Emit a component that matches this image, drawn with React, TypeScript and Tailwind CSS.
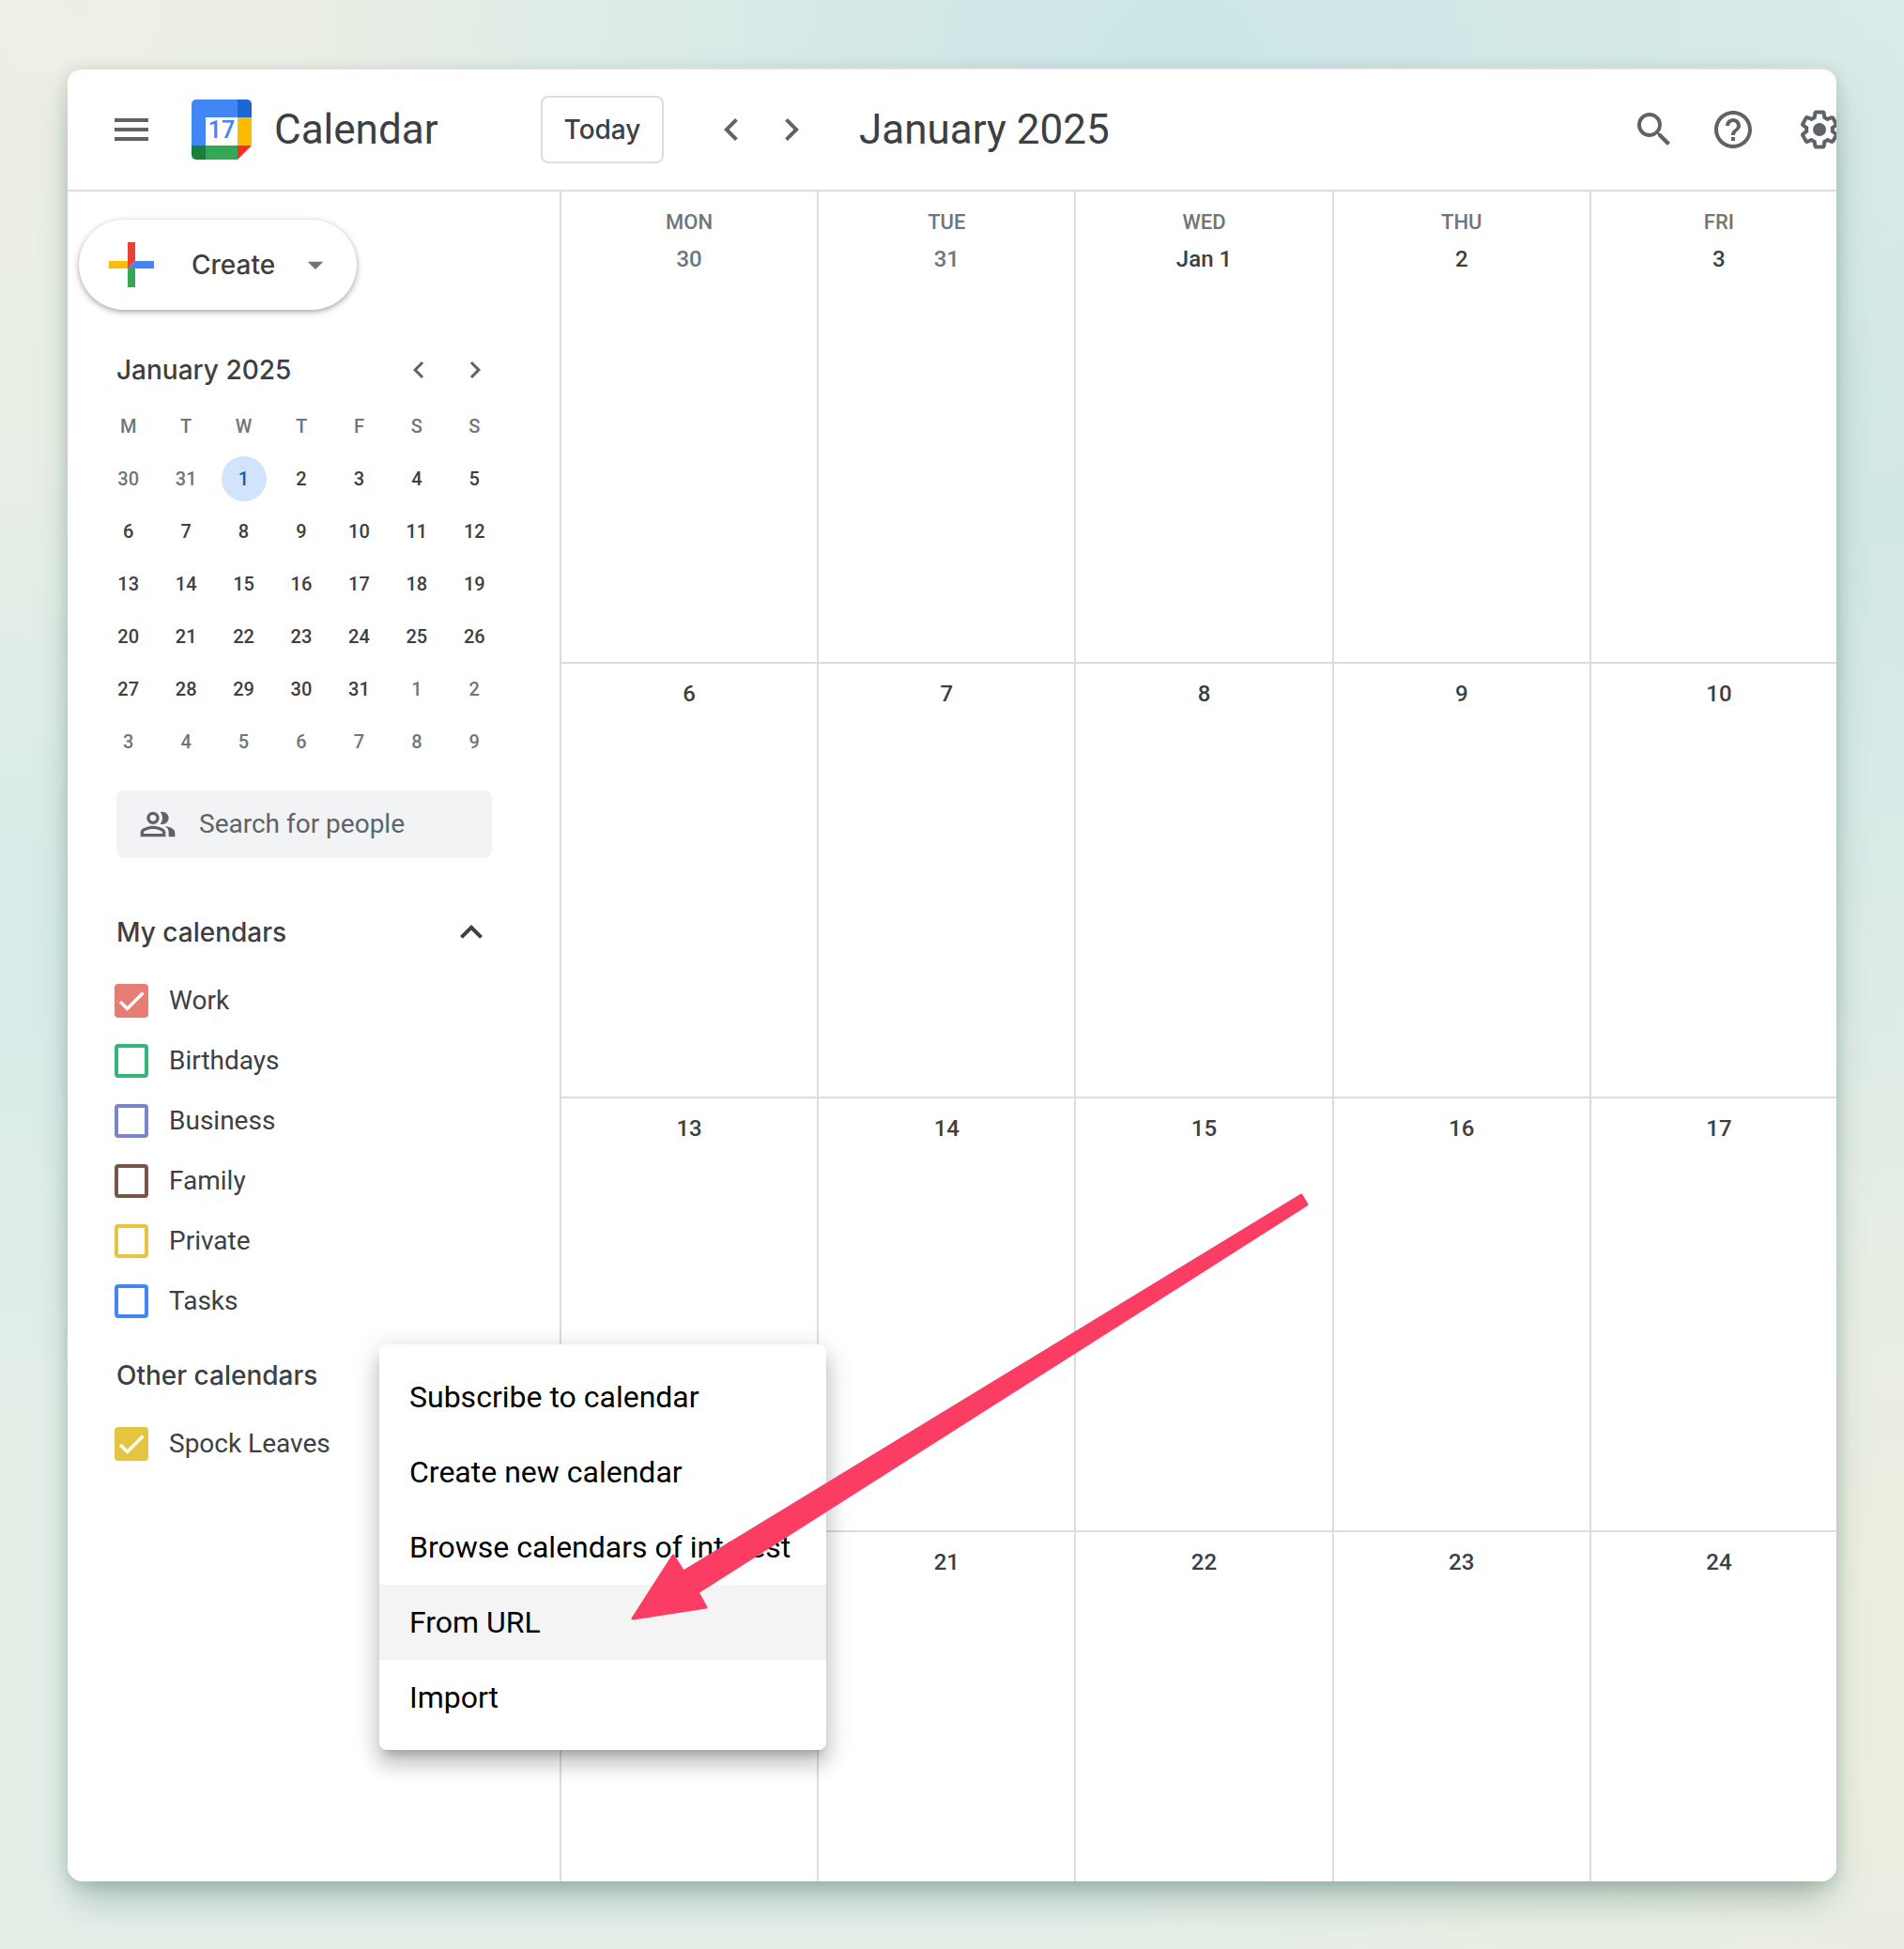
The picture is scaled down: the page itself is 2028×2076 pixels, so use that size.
import { useState } from 'react';
import {
  MdArrowDropDown,
  MdChevronLeft,
  MdChevronRight,
  MdExpandLess,
  MdHelpOutline,
  MdMenu,
  MdSearch,
} from 'react-icons/md';

interface Day {
  label: string;
  muted?: boolean;
}

interface CalendarEntry {
  name: string;
  checked: boolean;
  box: string;
}

const weekdays = ['MON', 'TUE', 'WED', 'THU', 'FRI'];

const weeks: Day[][] = [
  [
    { label: '30', muted: true },
    { label: '31', muted: true },
    { label: 'Jan 1' },
    { label: '2' },
    { label: '3' },
  ],
  [{ label: '6' }, { label: '7' }, { label: '8' }, { label: '9' }, { label: '10' }],
  [{ label: '13' }, { label: '14' }, { label: '15' }, { label: '16' }, { label: '17' }],
  // Monday sits under the open menu
  [{ label: '' }, { label: '21' }, { label: '22' }, { label: '23' }, { label: '24' }],
];

const myCalendars: CalendarEntry[] = [
  { name: 'Work', checked: true, box: 'border-[#e67c73] checked:bg-[#e67c73]' },
  { name: 'Birthdays', checked: false, box: 'border-[#33b679] checked:bg-[#33b679]' },
  { name: 'Business', checked: false, box: 'border-[#7986cb] checked:bg-[#7986cb]' },
  { name: 'Family', checked: false, box: 'border-[#795548] checked:bg-[#795548]' },
  { name: 'Private', checked: false, box: 'border-[#e4c441] checked:bg-[#e4c441]' },
  { name: 'Tasks', checked: false, box: 'border-[#4285f4] checked:bg-[#4285f4]' },
];

const otherCalendars: CalendarEntry[] = [
  { name: 'Spock Leaves', checked: true, box: 'border-[#e4c441] checked:bg-[#e4c441]' },
];

const menuItems = [
  'Subscribe to calendar',
  'Create new calendar',
  'Browse calendars of interest',
  'From URL',
  'Import',
];

// Six weeks starting on Monday, December 30
const miniWeeks = Array.from({ length: 6 }, (_, week) =>
  Array.from({ length: 7 }, (_, day) => {
    const date = new Date(2024, 11, 30 + week * 7 + day);
    return { date: date.getDate(), inMonth: date.getMonth() === 0 };
  })
);

function Logo() {
  return (
    <svg viewBox="0 0 64 64" className="w-16 h-16" aria-hidden="true">
      <path d="M5 0h44v19H15v30H0V5a5 5 0 0 1 5-5z" fill="#4285f4" />
      <path d="M49 0h10a5 5 0 0 1 5 5v14H49z" fill="#1967d2" />
      <path d="M49 19h15v30H49z" fill="#fbbc04" />
      <path d="M15 49h34v15H15z" fill="#34a853" />
      <path d="M0 49h15v15H5a5 5 0 0 1-5-5z" fill="#188038" />
      <path d="M49 49h15L49 64z" fill="#fc2c25" />
      <path d="M15 19h34v30H15z" fill="#fff" />
      <text
        x="32"
        y="41"
        textAnchor="middle"
        fontFamily="Roboto, sans-serif"
        fontSize="25"
        fontWeight="500"
        fill="#4285f4"
      >
        17
      </text>
    </svg>
  );
}

function PlusIcon() {
  return (
    <svg viewBox="0 0 36 36" className="w-[72px] h-[72px]" aria-hidden="true">
      <path fill="#34a853" d="M16 16v14h4V20z" />
      <path fill="#4285f4" d="M30 16H20l-4 4h14z" />
      <path fill="#fbbc05" d="M6 16v4h10l4-4z" />
      <path fill="#ea4335" d="M20 16V6h-4v14z" />
    </svg>
  );
}

function PeopleIcon() {
  return (
    <svg viewBox="0 0 24 24" className="w-10 h-10 shrink-0" fill="currentColor" aria-hidden="true">
      <path d="M15 8c0-1.42-.5-2.73-1.33-3.76.42-.14.86-.24 1.33-.24 2.21 0 4 1.79 4 4s-1.79 4-4 4c-.43 0-.84-.09-1.23-.21-.03-.01-.06-.02-.1-.03A5.98 5.98 0 0 0 15 8zm1.66 5.13C18.03 14.06 19 15.32 19 17v3h4v-3c0-2.18-3.58-3.47-6.34-3.87z" />
      <path
        fillRule="evenodd"
        d="M9 4c2.21 0 4 1.79 4 4s-1.79 4-4 4-4-1.79-4-4 1.79-4 4-4zm0 2a2 2 0 1 0 0 4 2 2 0 0 0 0-4zm0 7c2.67 0 8 1.34 8 4v3H1v-3c0-2.66 5.33-4 8-4zm6 5v-.99C14.8 16.29 11.7 15 9 15s-5.8 1.29-6 2.01V18h12z"
      />
    </svg>
  );
}

function SettingsIcon() {
  return (
    <svg viewBox="0 0 24 24" className="w-12 h-12" fill="currentColor" aria-hidden="true">
      <path d="M13.85 22.25h-3.7c-.74 0-1.36-.54-1.45-1.27l-.27-1.89c-.27-.14-.53-.29-.79-.46l-1.8.72c-.7.26-1.47-.03-1.81-.65L2.2 15.53c-.35-.66-.2-1.44.36-1.88l1.53-1.19c-.01-.15-.02-.3-.02-.46 0-.15.01-.31.02-.46l-1.52-1.19c-.59-.45-.74-1.26-.37-1.88l1.85-3.19c.34-.62 1.11-.9 1.79-.63l1.81.73c.26-.17.52-.32.78-.46l.27-1.91c.09-.7.71-1.25 1.44-1.25h3.7c.74 0 1.36.54 1.45 1.27l.27 1.89c.27.14.53.29.79.46l1.8-.72c.71-.26 1.48.03 1.82.65l1.84 3.18c.36.66.2 1.44-.36 1.88l-1.52 1.19c.01.15.02.3.02.46s-.01.31-.02.46l1.52 1.19c.56.45.72 1.23.37 1.86l-1.86 3.22c-.34.62-1.11.9-1.8.63l-1.8-.72c-.26.17-.52.32-.78.46l-.27 1.91c-.1.68-.72 1.22-1.46 1.22zm-3.23-2h2.76l.37-2.55.53-.22c.44-.18.88-.44 1.34-.78l.45-.34 2.38.96 1.38-2.4-2.03-1.58.07-.56c.03-.26.06-.51.06-.78s-.03-.53-.06-.78l-.07-.56 2.03-1.58-1.39-2.4-2.39.96-.45-.35c-.42-.32-.87-.58-1.33-.77l-.52-.22-.37-2.55h-2.76l-.37 2.55-.53.21c-.44.19-.88.44-1.34.79l-.45.33-2.38-.95-1.39 2.39 2.03 1.58-.07.56a7 7 0 0 0-.06.79c0 .26.02.53.06.78l.07.56-2.03 1.58 1.38 2.4 2.39-.96.45.35c.43.33.86.58 1.33.77l.53.22.38 2.55z" />
      <circle cx="12" cy="12" r="3.5" />
    </svg>
  );
}

function Header() {
  return (
    <header className="flex items-center h-[130px] pl-11 border-b-2 border-[#dadce0] text-[#5f6368]">
      <button aria-label="Main menu">
        <MdMenu className="w-12 h-12" />
      </button>
      <div className="flex items-center ml-10 gap-6">
        <Logo />
        <span className="w-[284px] text-[44px] leading-[56px] text-[#3c4043]">Calendar</span>
      </div>
      <button className="h-[72px] w-[131px] border-2 border-[#dadce0] rounded-lg font-[Inter,sans-serif] text-[28px] font-medium text-[#3c4043]">
        Today
      </button>
      <div className="flex ml-10">
        <button aria-label="Previous month" className="p-2">
          <MdChevronLeft className="w-12 h-12" />
        </button>
        <button aria-label="Next month" className="p-2">
          <MdChevronRight className="w-12 h-12" />
        </button>
      </div>
      <h1 className="ml-10 text-[44px] leading-[56px] text-[#3c4043]">January 2025</h1>
      <div className="flex gap-9 ml-auto -mr-1.5 shrink-0">
        <button aria-label="Search">
          <MdSearch className="w-12 h-12" />
        </button>
        <button aria-label="Support">
          <MdHelpOutline className="w-12 h-12" />
        </button>
        <button aria-label="Settings menu" className="ml-2">
          <SettingsIcon />
        </button>
      </div>
    </header>
  );
}

function MiniCalendar() {
  return (
    <div className="mt-9">
      <div className="flex items-center h-14 pl-[52px] text-[#3c4043]">
        <h2 className="font-[Inter,sans-serif] text-[28px] font-medium">January 2025</h2>
        <div className="flex gap-6 ml-auto mr-[72px] text-[#5f6368]">
          <button aria-label="Previous month">
            <MdChevronLeft className="w-9 h-9" />
          </button>
          <button aria-label="Next month">
            <MdChevronRight className="w-9 h-9" />
          </button>
        </div>
      </div>
      <table className="w-[430px] mt-1 ml-[34px] table-fixed text-center text-xl font-medium text-[#3c4043]">
        <thead>
          <tr className="h-14 text-[#70757a]">
            {['M', 'T', 'W', 'T', 'F', 'S', 'S'].map((day, i) => (
              <th key={i} className="p-0 font-medium">
                {day}
              </th>
            ))}
          </tr>
        </thead>
        <tbody>
          {miniWeeks.map((week, w) => (
            <tr key={w} className="h-14">
              {week.map(({ date, inMonth }) => (
                <td key={date} className={inMonth ? 'p-0' : 'p-0 text-[#70757a]'}>
                  {inMonth && date === 1 ? (
                    <span className="flex items-center justify-center w-12 h-12 mx-auto rounded-full bg-[#d2e3fc] text-[#185abc]">
                      {date}
                    </span>
                  ) : (
                    date
                  )}
                </td>
              ))}
            </tr>
          ))}
        </tbody>
      </table>
    </div>
  );
}

function CalendarList({ entries }: { entries: CalendarEntry[] }) {
  return (
    <ul>
      {entries.map((entry) => (
        <li key={entry.name} className="h-16 pl-[50px] flex items-center">
          <label className="flex items-center gap-[22px] text-[28px] leading-9 text-[#3c4043]">
            <span className="grid w-9 h-9 text-white">
              <input
                type="checkbox"
                defaultChecked={entry.checked}
                className={`peer appearance-none col-start-1 row-start-1 w-9 h-9 border-4 rounded-sm ${entry.box}`}
              />
              <svg
                viewBox="0 0 24 24"
                className="col-start-1 row-start-1 w-9 h-9 opacity-0 peer-checked:opacity-100 pointer-events-none"
                aria-hidden="true"
              >
                <path d="M4.1 12.7 9 17.6 20.3 6.3" fill="none" stroke="currentColor" strokeWidth="2.4" />
              </svg>
            </span>
            {entry.name}
          </label>
        </li>
      ))}
    </ul>
  );
}

function AddCalendarMenu() {
  return (
    <div
      role="menu"
      className="absolute z-10 top-2 left-[332px] w-[476px] py-4 rounded-lg bg-white shadow-[0_10px_10px_-6px_rgba(0,0,0,0.2),0_16px_20px_2px_rgba(0,0,0,0.14),0_6px_28px_4px_rgba(0,0,0,0.12)]"
    >
      {menuItems.map((item) => (
        <button
          key={item}
          role="menuitem"
          className={`block w-full h-20 px-8 text-left text-[32px] whitespace-nowrap text-black ${
            item === 'From URL' ? 'bg-[#f4f4f4]' : ''
          }`}
        >
          {item}
        </button>
      ))}
    </div>
  );
}

function Sidebar() {
  const [open, setOpen] = useState(true);

  return (
    <aside className="w-[524px] shrink-0">
      <button className="flex items-center w-[296px] h-24 mt-[30px] ml-3 pl-5 pr-6 rounded-full bg-white font-[Inter,sans-serif] text-[28px] font-medium text-[#3c4043] shadow-[0_2px_4px_0_rgba(60,64,67,0.3),0_2px_6px_2px_rgba(60,64,67,0.15)]">
        <PlusIcon />
        <span className="ml-7">Create</span>
        <MdArrowDropDown className="w-10 h-10 ml-auto shrink-0 text-[#70757a]" />
      </button>

      <MiniCalendar />

      <label className="flex items-center w-[400px] h-[72px] mt-6 ml-[52px] pl-6 gap-6 rounded-lg bg-[#f1f3f4] text-[#5f6368]">
        <PeopleIcon />
        <input
          type="text"
          placeholder="Search for people"
          aria-label="Search for people"
          className="w-full min-w-0 text-[28px] placeholder:text-[#5f6368] outline-none"
        />
      </label>

      <section className="mt-[38px]">
        <div className="flex items-center justify-between h-[82px] pl-[52px] pr-[70px] text-[#3c4043]">
          <h2 className="font-[Inter,sans-serif] text-[28px] font-medium">My calendars</h2>
          <button aria-label="Toggle my calendars" aria-expanded={open} onClick={() => setOpen(!open)}>
            <MdExpandLess className="w-12 h-12" />
          </button>
        </div>
        {open && <CalendarList entries={myCalendars} />}
      </section>

      <section className="relative mt-1.5">
        <h2 className="flex items-center h-[82px] pl-[52px] font-[Inter,sans-serif] text-[28px] font-medium text-[#3c4043]">
          Other calendars
        </h2>
        <CalendarList entries={otherCalendars} />
        <AddCalendarMenu />
      </section>
    </aside>
  );
}

function MonthGrid() {
  return (
    <main className="flex-1 -mr-[11px] grid grid-cols-5 grid-rows-[501px_463px_462px_1fr]">
      {weeks.map((week, w) =>
        week.map((day, d) => (
          <div
            key={`${w}-${d}`}
            className={`flex flex-col items-center border-l-2 border-[#dadce0] font-medium ${
              w === 0 ? 'pt-5 gap-2.5' : 'pt-4 border-t-2'
            }`}
          >
            {w === 0 && (
              <span className="text-[22px] leading-[26px] text-[#70757a]">{weekdays[d]}</span>
            )}
            <span className={`text-2xl ${day.muted ? 'text-[#70757a]' : 'text-[#3c4043]'}`}>
              {day.label}
            </span>
          </div>
        ))
      )}
    </main>
  );
}

function Arrow() {
  return (
    <svg
      viewBox="0 0 724 460"
      className="absolute z-20 top-[1194px] left-[599px] w-[724px] h-[460px] pointer-events-none"
      aria-hidden="true"
    >
      <path
        d="M3 456 46 389l11 17L715 5l6 10L72 428l9 16z"
        fill="#fc3d63"
        stroke="#fc3d63"
        strokeWidth="3"
        strokeLinejoin="round"
      />
    </svg>
  );
}

export default function App() {
  return (
    <div className="min-h-screen p-[72px] font-[Roboto,sans-serif] bg-[#e4efe8] bg-[radial-gradient(circle_at_62%_4%,#cae4e6_0%,transparent_40%),radial-gradient(circle_at_100%_26%,#d1e7e5_0%,transparent_34%),radial-gradient(circle_at_0%_48%,#d7ebe8_0%,transparent_22%),radial-gradient(circle_at_4%_0%,#eeefe4_0%,transparent_34%),radial-gradient(circle_at_100%_86%,#edeee0_0%,transparent_34%)]">
      <div className="rounded-2xl shadow-[0_24px_40px_-8px_rgba(50,95,85,0.36),0_4px_16px_rgba(50,95,85,0.2)]">
        <div className="relative overflow-hidden min-h-[1932px] flex flex-col rounded-2xl border-t-2 border-[#e2e0dd] bg-white">
          <Header />
          <div className="flex flex-1">
            <Sidebar />
            <MonthGrid />
          </div>
          <Arrow />
        </div>
      </div>
    </div>
  );
}
